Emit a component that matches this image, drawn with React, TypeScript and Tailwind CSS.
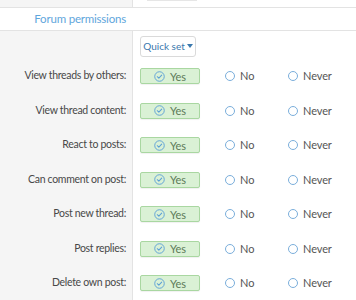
const ROWS = [
  'View threads by others:',
  'View thread content:',
  'React to posts:',
  'Can comment on post:',
  'Post new thread:',
  'Post replies:',
  'Delete own post:',
];

function CheckCircle() {
  return (
    <svg width="11" height="11" viewBox="0 0 12 12" fill="none" className="shrink-0">
      <circle cx="6" cy="6" r="5.2" stroke="#5a9fd6" strokeWidth="1" />
      <path d="M3.6 6.2 L5.3 7.8 L8.4 4.5" stroke="#5a9fd6" strokeWidth="1.1" strokeLinecap="round" strokeLinejoin="round" />
    </svg>
  );
}

function Radio({ label }: { label: string }) {
  return (
    <div className="flex items-center gap-[5px]">
      <span className="w-[10px] h-[10px] rounded-full border border-[#7aaedb] bg-white shrink-0" />
      <span className="text-[11px] tracking-[-0.1px] text-[#555]">{label}</span>
    </div>
  );
}

export default function App() {
  return (
    <div
      className="w-[356px] h-[300px] overflow-hidden bg-white"
      style={{ fontFamily: 'Lato, "Noto Sans", sans-serif' }}
    >
      {/* bottom edge of previous section */}
      <div className="flex h-[8px] border-b border-[#e3e3e3]">
        <div className="w-[133px] bg-[#f5f5f5] border-r border-[#e3e3e3]" />
        <div className="flex-1 pl-[14px]">
          <div className="w-[50px] h-[1px] bg-[#e6e6e6]" />
        </div>
      </div>

      {/* section header */}
      <div className="h-[23px] border-b border-[#e3e3e3] flex items-center">
        <div className="w-[133px] text-right pr-[7px] text-[11.5px] tracking-[-0.2px] text-[#5fa6dc] leading-none">Forum permissions</div>
      </div>

      <div className="flex">
        <div className="w-[133px] bg-[#f5f5f5] border-r border-[#e3e3e3] shrink-0">
          <div className="h-[28px]" />
          {ROWS.map(r => (
            <div key={r} className="h-[34.5px] flex items-center justify-end pr-[6px] text-[10.5px] tracking-[-0.3px] text-[#484848]">
              {r}
            </div>
          ))}
        </div>

        <div className="flex-1 pl-[7px]">
          <div className="h-[28px] flex items-center">
            <button className="h-[21px] w-[56px] mt-[2px] rounded-[3px] border border-[#dadada] bg-white text-[10px] text-[#3a78ad] flex items-center justify-center gap-[2px]">
              Quick set
              <svg width="6" height="4" viewBox="0 0 6 4"><path d="M0 0 H6 L3 4 Z" fill="#3a78ad" /></svg>
            </button>
          </div>
          {ROWS.map(r => (
            <div key={r} className="h-[34.5px] flex items-center">
              <div className="w-[60px] h-[16px] rounded-[2px] border border-[#a9d7a1] bg-[#daf1d5] flex items-center justify-center gap-[5px] shadow-[0_1px_1px_rgba(0,0,0,0.06)]">
                <CheckCircle />
                <span className="text-[11px] text-[#5c7a58] leading-none">Yes</span>
              </div>
              <div className="w-[25px]" />
              <div className="w-[63px]">
                <Radio label="No" />
              </div>
              <Radio label="Never" />
            </div>
          ))}
        </div>
      </div>
    </div>
  );
}
